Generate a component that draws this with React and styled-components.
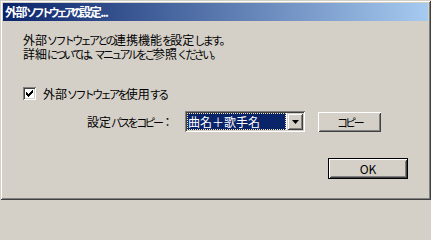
import React from "react";
import styled, { createGlobalStyle } from "styled-components";

const Global = createGlobalStyle`
  html, body { margin: 0; padding: 0; background: #d4d0c8; }
  * { box-sizing: border-box; }
`;

const Window = styled.div`
  width: 431px;
  height: 200px;
  background: #d4d0c8;
  padding: 3px;
  display: flex;
  flex-direction: column;
  font-family: "Noto Sans CJK JP", sans-serif;
  font-size: 12px;
  color: #000;
  box-shadow: inset 1px 1px #d4d0c8, inset -1px -1px #404040,
    inset 2px 2px #ffffff, inset -2px -2px #808080;
`;

/* MS UI Gothic draws kana and punctuation narrower than kanji */
const Run = styled.span`
  font-size: ${(p) => p.$size}px;
  letter-spacing: ${(p) => p.$ls}px;
`;

const KIND = (ch) => {
  if (/[、。]/.test(ch)) return "punct";
  if (/[\u3040-\u30ff]/.test(ch)) return "kana";
  return "other";
};

function Jp({ text, bold }) {
  const runs = [];
  for (const ch of text) {
    const k = KIND(ch);
    if (runs.length && runs[runs.length - 1].k === k) runs[runs.length - 1].t += ch;
    else runs.push({ k, t: ch });
  }
  return runs.map((r, i) => {
    if (r.k === "kana")
      return (
        <Run key={i} $size={11} $ls={bold ? -3.4 : -2.6}>
          {r.t}
        </Run>
      );
    if (r.k === "punct")
      return (
        <Run key={i} $size={12} $ls={-6}>
          {r.t}
        </Run>
      );
    return (
      <Run key={i} $size={12} $ls={bold ? -1.5 : 0}>
        {r.t}
      </Run>
    );
  });
}

const TitleBar = styled.div`
  height: 18px;
  flex: none;
  background: linear-gradient(to right, #0a246a, #a6caf0);
  color: #fff;
  font-weight: bold;
  line-height: 18px;
  padding-left: 2px;
  white-space: nowrap;
`;

const Body = styled.div`
  flex: 1;
  display: flex;
  flex-direction: column;
  padding: 12px 20px 0 20px;
`;

const Message = styled.p`
  margin: 0;
  line-height: 13px;
  white-space: nowrap;
`;

const CheckRow = styled.label`
  display: flex;
  align-items: center;
  gap: 7px;
  margin-top: 26px;
  height: 13px;
  white-space: nowrap;
`;

const CheckBox = styled.span`
  width: 13px;
  height: 13px;
  flex: none;
  background: #fff;
  box-shadow: inset 1px 1px #808080, inset -1px -1px #ffffff,
    inset 2px 2px #404040, inset -2px -2px #d4d0c8;
  display: flex;
  align-items: center;
  justify-content: center;
`;

const CopyRow = styled.div`
  display: flex;
  align-items: center;
  margin-top: 11px;
  padding-left: 64px;
  height: 21px;
`;

const FieldLabel = styled.span`
  width: 98px;
  white-space: nowrap;
`;

const Combo = styled.div`
  width: 120px;
  height: 21px;
  background: #fff;
  padding: 2px;
  display: flex;
  box-shadow: inset 1px 1px #808080, inset -1px -1px #ffffff,
    inset 2px 2px #404040, inset -2px -2px #d4d0c8;
`;

const Selected = styled.div`
  flex: 1;
  margin: 0 1px 0 0;
  background: #0a246a;
  color: #fff;
  border: 1px dotted #f4e4a8;
  line-height: 15px;
  white-space: nowrap;
  overflow: hidden;
`;

const DropButton = styled.div`
  width: 16px;
  flex: none;
  background: #d4d0c8;
  box-shadow: inset 1px 1px #d4d0c8, inset -1px -1px #404040,
    inset 2px 2px #ffffff, inset -2px -2px #808080;
  display: flex;
  align-items: center;
  justify-content: center;
`;

const Button = styled.button`
  font-family: inherit;
  font-size: 12px;
  color: #000;
  background: #d4d0c8;
  border: ${(p) => (p.$default ? "1px solid #000" : "none")};
  width: ${(p) => p.$w}px;
  height: ${(p) => p.$h}px;
  padding: 0;
  line-height: 1;
  box-shadow: inset 1px 1px #ffffff, inset -1px -1px #404040,
    inset 2px 2px #d4d0c8, inset -2px -2px #808080;
`;

const Spacer = styled.div`
  flex: none;
  margin-left: ${(p) => p.$m}px;
`;

const Footer = styled.div`
  display: flex;
  justify-content: flex-end;
  margin-top: 26px;
`;

export default function App() {
  return (
    <>
      <Global />
      <Window>
        <TitleBar>
          <Jp bold text="外部ソフトウェアの設定..." />
        </TitleBar>
        <Body>
          <Message>
            <Jp text="外部ソフトウェアとの連携機能を設定します。" />
          </Message>
          <Message>
            <Jp text="詳細については、マニュアルをご参照ください。" />
          </Message>
          <CheckRow>
            <CheckBox>
              <svg width="7" height="7" viewBox="0 0 7 7">
                <path
                  d="M0 2h1v1h1v1h1v-1h1v-1h1v-1h1v-1h1v3h-1v1h-1v1h-1v1h-1v1h-1v-1h-1v-1h-1z"
                  fill="#000"
                />
              </svg>
            </CheckBox>
            <span>
              <Jp text="外部ソフトウェアを使用する" />
            </span>
          </CheckRow>
          <CopyRow>
            <FieldLabel>
              <Jp text="設定パスをコピー：" />
            </FieldLabel>
            <Combo>
              <Selected>曲名＋歌手名</Selected>
              <DropButton>
                <svg width="7" height="4" viewBox="0 0 7 4">
                  <path d="M0 0h7L3.5 4z" fill="#000" />
                </svg>
              </DropButton>
            </Combo>
            <Spacer $m={13}>
              <Button $w={63} $h={20}>
                <Jp text="コピー" />
              </Button>
            </Spacer>
          </CopyRow>
          <Footer>
            <Button $default $w={80} $h={21}>OK</Button>
          </Footer>
        </Body>
      </Window>
    </>
  );
}
